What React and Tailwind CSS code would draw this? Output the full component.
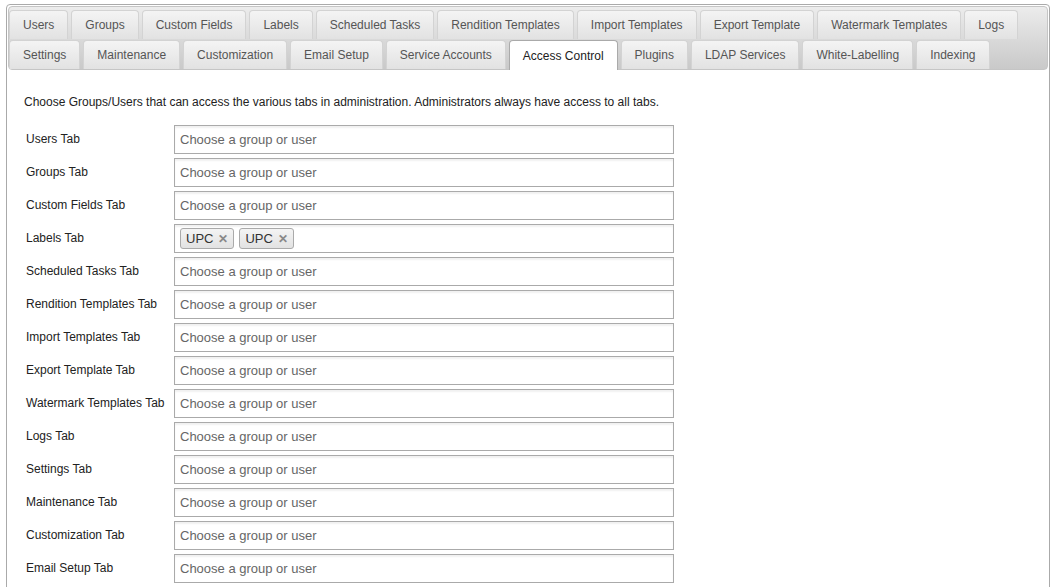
import React from "react";

const tabsRow1 = [
  "Users",
  "Groups",
  "Custom Fields",
  "Labels",
  "Scheduled Tasks",
  "Rendition Templates",
  "Import Templates",
  "Export Template",
  "Watermark Templates",
  "Logs",
];

const tabsRow2 = [
  "Settings",
  "Maintenance",
  "Customization",
  "Email Setup",
  "Service Accounts",
  "Access Control",
  "Plugins",
  "LDAP Services",
  "White-Labelling",
  "Indexing",
];

const rows = [
  "Users Tab",
  "Groups Tab",
  "Custom Fields Tab",
  "Labels Tab",
  "Scheduled Tasks Tab",
  "Rendition Templates Tab",
  "Import Templates Tab",
  "Export Template Tab",
  "Watermark Templates Tab",
  "Logs Tab",
  "Settings Tab",
  "Maintenance Tab",
  "Customization Tab",
  "Email Setup Tab",
];

const Tab = ({ label, active }) => (
  <li
    className={
      active
        ? "h-[30px] -mb-[1px] flex items-center px-[13px] border border-b-0 border-[#aaa] rounded-t-[4px] bg-white text-[#212121] z-10"
        : "h-[29px] flex items-center px-[13px] border border-b-0 border-[#d3d3d3] rounded-t-[4px] bg-gradient-to-b from-[#f4f4f4] to-[#e2e2e2] text-[#555]"
    }
  >
    {label}
  </li>
);

const Chip = () => (
  <span className="flex items-center h-[21px] px-[5px] gap-[5px] border border-[#aaa] rounded-[3px] bg-gradient-to-b from-[#f4f4f4] to-[#e2e2e2] text-[13px] text-[#333]">
    UPC
    <span className="text-[#888] text-[12px] font-bold leading-none">✕</span>
  </span>
);

export default function App() {
  return (
    <div
      className="bg-white h-[587px] overflow-hidden pt-[4px] pl-[6px] pr-[9px]"
      style={{ fontFamily: '"Liberation Sans", Arial, sans-serif' }}
    >
      <div className="border border-[#aaa] rounded-[4px] p-[1px] h-[700px]">
        <div className="border border-[#c5c5c5] rounded-[4px] bg-gradient-to-b from-[#ececec] to-[#c9c9c9] pt-[3px] pl-[0px] pr-[1px]">
          <ul className="flex flex-col gap-y-[1px] text-[12px]">
            <div className="flex gap-x-[3px]">
              {tabsRow1.map((t) => (
                <Tab key={t} label={t} />
              ))}
            </div>
            <div className="flex gap-x-[3px]">
              {tabsRow2.map((t) => (
                <Tab key={t} label={t} active={t === "Access Control"} />
              ))}
            </div>
          </ul>
        </div>

        <div className="pl-[16px] pt-[23px] text-[12px] text-[#222]">
          <p className="mb-[14px]">
            Choose Groups/Users that can access the various tabs in administration. Administrators always have access to all tabs.
          </p>
          <div className="flex flex-col gap-y-[4px]">
            {rows.map((r) => (
              <div key={r} className="flex items-center">
                <span className="w-[150px] pl-[2px] -mt-[2px]">{r}</span>
                <div className="w-[500px] h-[29px] border border-[#aaa] shadow-[inset_0_2px_2px_rgba(0,0,0,0.06)] bg-white flex items-center px-[5px] gap-[5px] text-[13px] text-[#666]">
                  {r === "Labels Tab" ? (
                    <>
                      <Chip />
                      <Chip />
                    </>
                  ) : (
                    "Choose a group or user"
                  )}
                </div>
              </div>
            ))}
          </div>
        </div>
      </div>
    </div>
  );
}
